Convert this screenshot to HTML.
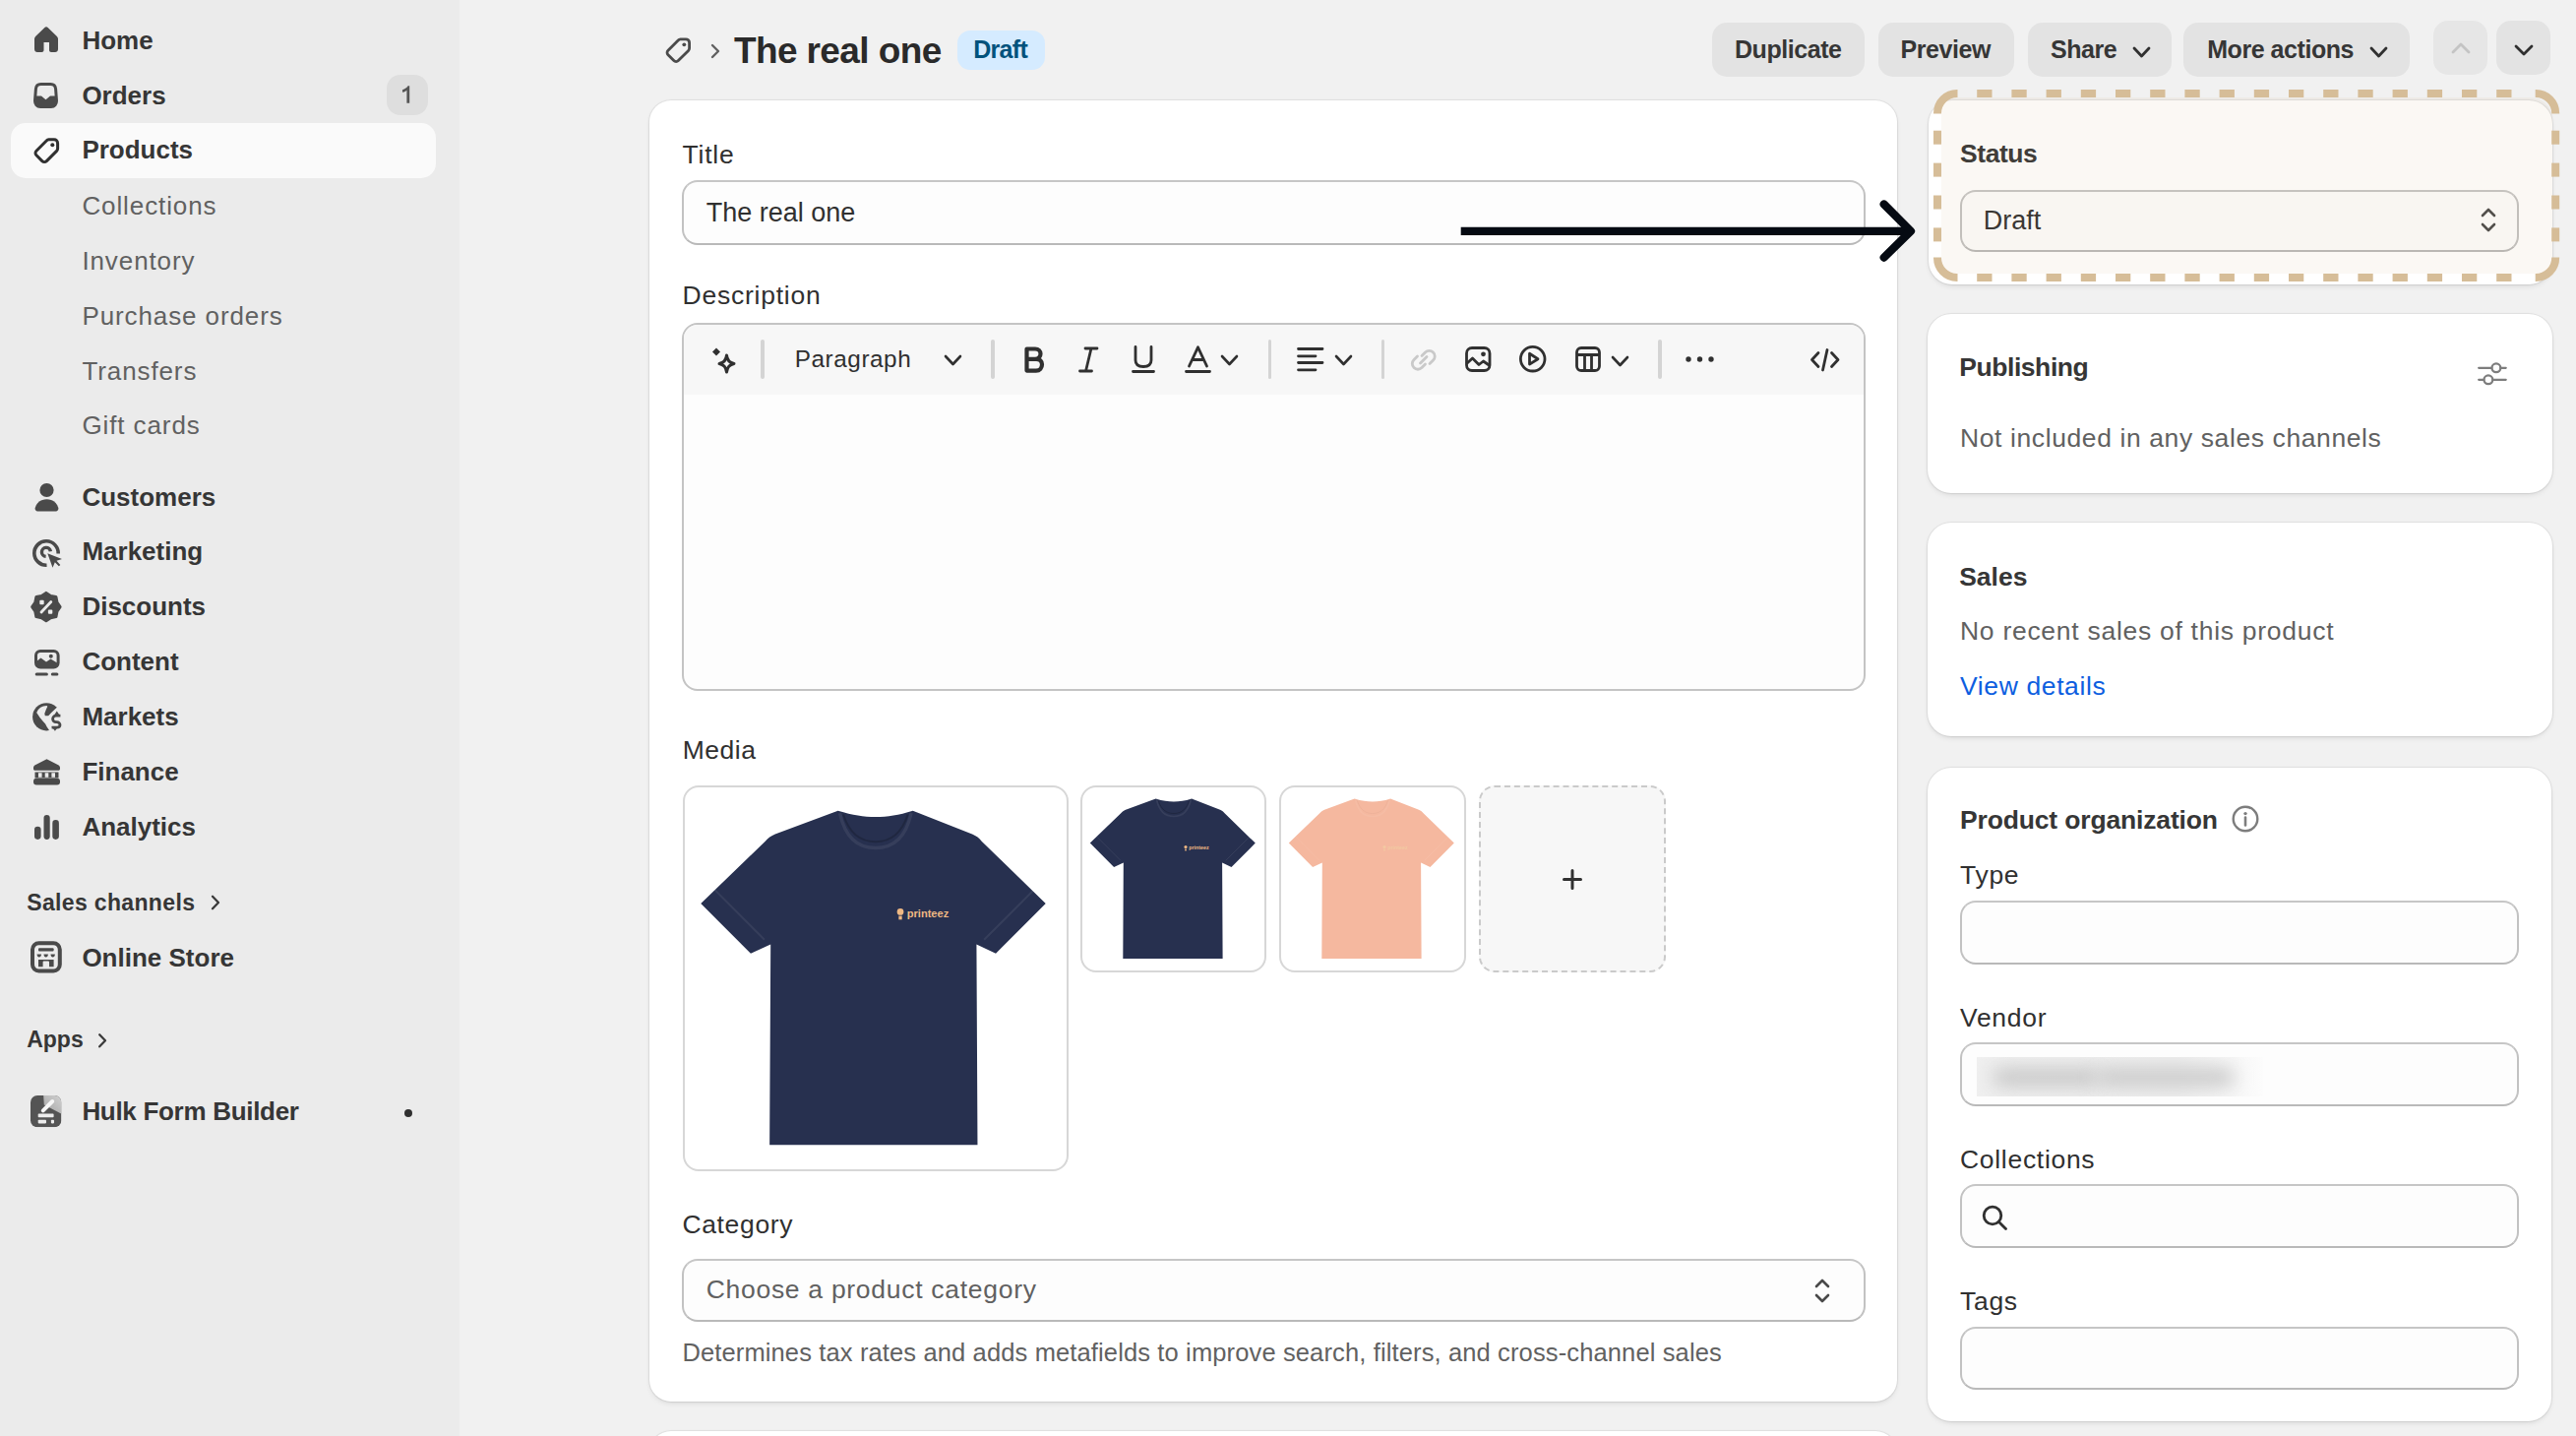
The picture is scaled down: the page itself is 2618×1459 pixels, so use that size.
<!DOCTYPE html>
<html><head><meta charset="utf-8"><style>
html,body{margin:0;padding:0;width:2618px;height:1459px;overflow:hidden;background:#f1f1f1;font-family:'Liberation Sans', sans-serif;}
.t{position:absolute;white-space:nowrap;line-height:1;}
.b{position:absolute;}
.s{position:absolute;overflow:visible;}
</style></head><body>
<div class="b" style="left:0.0px;top:0.0px;width:467.0px;height:1459.0px;background:#ebebeb"></div>
<div class="b" style="left:11.0px;top:124.5px;width:432.0px;height:56.3px;background:#fafafa;border-radius:15px"></div>
<div class="b" style="left:392.6px;top:76.3px;width:42.6px;height:41.2px;background:#dedede;border-radius:14px"></div>
<svg class="s" style="left:407.0px;top:86.0px;" width="12" height="19" viewBox="0 0 12 19"><path d="M9.2 18.8V1.2H7.6C6.8 2.8 4.5 4.6 2 5.2V7.8C4.2 7.4 5.6 6.6 6.4 5.8V18.8Z" fill="#555555"/></svg>
<div class="t" style="left:83.4px;top:28.09px;font-size:26px;font-weight:700;color:#363636;">Home</div>
<div class="t" style="left:83.4px;top:83.79px;font-size:26px;font-weight:700;color:#363636;">Orders</div>
<div class="t" style="left:83.4px;top:139.49px;font-size:26px;font-weight:700;color:#363636;">Products</div>
<div class="t" style="left:83.4px;top:195.99px;font-size:26px;font-weight:400;color:#616161;letter-spacing:0.9px;">Collections</div>
<div class="t" style="left:83.4px;top:252.19px;font-size:26px;font-weight:400;color:#616161;letter-spacing:0.9px;">Inventory</div>
<div class="t" style="left:83.4px;top:307.99px;font-size:26px;font-weight:400;color:#616161;letter-spacing:0.9px;">Purchase orders</div>
<div class="t" style="left:83.4px;top:363.69px;font-size:26px;font-weight:400;color:#616161;letter-spacing:0.9px;">Transfers</div>
<div class="t" style="left:83.4px;top:418.99px;font-size:26px;font-weight:400;color:#616161;letter-spacing:0.9px;">Gift cards</div>
<div class="t" style="left:83.4px;top:491.69px;font-size:26px;font-weight:700;color:#363636;">Customers</div>
<div class="t" style="left:83.4px;top:547.39px;font-size:26px;font-weight:700;color:#363636;">Marketing</div>
<div class="t" style="left:83.4px;top:603.19px;font-size:26px;font-weight:700;color:#363636;">Discounts</div>
<div class="t" style="left:83.4px;top:659.19px;font-size:26px;font-weight:700;color:#363636;">Content</div>
<div class="t" style="left:83.4px;top:715.19px;font-size:26px;font-weight:700;color:#363636;">Markets</div>
<div class="t" style="left:83.4px;top:771.19px;font-size:26px;font-weight:700;color:#363636;">Finance</div>
<div class="t" style="left:83.4px;top:827.19px;font-size:26px;font-weight:700;color:#363636;">Analytics</div>
<div class="t" style="left:27.2px;top:905.73px;font-size:23px;font-weight:700;color:#363636;letter-spacing:0.35px;">Sales channels</div>
<div class="t" style="left:83.4px;top:960.29px;font-size:26px;font-weight:700;color:#363636;">Online Store</div>
<div class="t" style="left:27.2px;top:1045.33px;font-size:23px;font-weight:700;color:#363636;">Apps</div>
<div class="t" style="left:83.4px;top:1115.99px;font-size:26px;font-weight:700;color:#363636;letter-spacing:-0.3px;">Hulk Form Builder</div>
<svg class="s" style="left:210.0px;top:906.0px;" width="16" height="22" viewBox="0 0 16 22"><path d="M6 4.8 L12 11 L6 17.2" fill="none" stroke="#3a3a3a" stroke-width="2.3" stroke-linecap="round" stroke-linejoin="round"/></svg>
<svg class="s" style="left:96.0px;top:1048.0px;" width="16" height="22" viewBox="0 0 16 22"><path d="M5.2 3.3 L11 9.3 L5.2 15.3" fill="none" stroke="#3a3a3a" stroke-width="2.3" stroke-linecap="round" stroke-linejoin="round"/></svg>
<div class="b" style="left:410.5px;top:1126.5px;width:8.0px;height:8.0px;background:#303030;border-radius:50%"></div>
<svg class="s" style="left:34.9px;top:26.8px;" width="24" height="26" viewBox="0 0 24 26"><path fill="#4a4a4a" d="M12 0.3C12.6 0.3 13.2 0.5 13.6 0.9L22.9 10C23.6 10.7 24 11.6 24 12.6V23C24 24.7 22.7 26 21 26H17C15.9 26 15 25.1 15 24V16H9.5V24C9.5 25.1 8.6 26 7.5 26H3C1.3 26 0 24.7 0 23V12.6C0 11.6 0.4 10.7 1.1 10L10.4 0.9C10.8 0.5 11.4 0.3 12 0.3Z"/></svg>
<svg class="s" style="left:34.4px;top:84.0px;" width="25" height="26" viewBox="0 0 25 26"><path fill="none" stroke="#4a4a4a" stroke-width="3" d="M7.5 1.5H17.5C20.5 1.5 22.3 3.3 22.6 6.3L23.5 18.5C23.5 22 21.5 24.5 18 24.5H7C3.5 24.5 1.5 22 1.5 18.5L2.4 6.3C2.7 3.3 4.5 1.5 7.5 1.5Z"/><path fill="#4a4a4a" d="M1.5 13.5H8L12.5 17.2L17 13.5H23.5V19C23.5 22.3 21.5 24.5 18 24.5H7C3.5 24.5 1.5 22.3 1.5 19Z"/></svg>
<svg class="s" style="left:34.0px;top:140.0px;" width="27" height="26" viewBox="0 0 27 26"><path fill="none" stroke="#303030" stroke-width="3" stroke-linejoin="round" d="M15.5 1.8H21C23 1.8 24.6 3.4 24.6 5.4V11C24.6 11.9 24.2 12.8 23.6 13.4L13.4 23.6C12.1 24.9 10.1 24.9 8.8 23.6L3 17.8C1.7 16.5 1.7 14.5 3 13.2L13.2 3C13.8 2.3 14.6 1.8 15.5 1.8Z"/><circle cx="19.3" cy="7.3" r="2" fill="#303030"/></svg>
<svg class="s" style="left:34.8px;top:490.6px;" width="25" height="29" viewBox="0 0 25 29"><circle cx="12.5" cy="7" r="7.1" fill="#4a4a4a"/><path fill="#4a4a4a" d="M12.5 16.2C18.5 16.2 22.8 19.8 24.3 25C24.7 26.6 23.7 28.4 21.8 28.4H3.2C1.3 28.4 0.3 26.6 0.7 25C2.2 19.8 6.5 16.2 12.5 16.2Z"/></svg>
<svg class="s" style="left:32.6px;top:546.8px;" width="31" height="31" viewBox="0 0 31 31"><path fill="none" stroke="#4a4a4a" stroke-width="3.6" d="M26.2 15.5A12.2 12.2 0 1 0 14.5 27.2"/><path fill="none" stroke="#4a4a4a" stroke-width="3.4" d="M18.4 13.2A4.5 4.5 0 1 0 13.6 18.4"/><path fill="#4a4a4a" d="M15.3 15.2L30 21L24.5 22.8L28.3 27L26.8 28.3L22.8 24.2L20.5 29.8Z"/></svg>
<svg class="s" style="left:31.1px;top:601.4px;" width="32" height="32" viewBox="0 0 32 32"><path fill="#4a4a4a" stroke="#4a4a4a" stroke-width="3" stroke-linejoin="round" d="M15.90 1.40L20.49 4.51L25.94 5.56L26.99 11.01L30.10 15.60L26.99 20.19L25.94 25.64L20.49 26.69L15.90 29.80L11.31 26.69L5.86 25.64L4.81 20.19L1.70 15.60L4.81 11.01L5.86 5.56L11.31 4.51Z"/><path stroke="#ebebeb" stroke-width="2.8" stroke-linecap="round" d="M11 21L20.8 10.5"/><rect x="9.3" y="8.8" width="4.4" height="4.4" rx="1" fill="#ebebeb"/><rect x="17.9" y="18.4" width="4.4" height="4.4" rx="1" fill="#ebebeb"/></svg>
<svg class="s" style="left:34.5px;top:659.5px;" width="26" height="27" viewBox="0 0 26 27"><rect x="1.5" y="1.5" width="22.6" height="16.5" rx="4.5" fill="none" stroke="#4a4a4a" stroke-width="3"/><path fill="#4a4a4a" d="M1.5 12.5L6.5 8.5L12 12.5L16.5 9.5L24 14V15C24 16.8 22.8 18 21 18H4.5C2.7 18 1.5 16.8 1.5 15Z"/><circle cx="16.8" cy="6.8" r="2" fill="#4a4a4a"/><rect x="0.7" y="23.4" width="13.2" height="3" rx="1.5" fill="#4a4a4a"/><rect x="16.8" y="23.4" width="7.6" height="3" rx="1.5" fill="#4a4a4a"/></svg>
<svg class="s" style="left:33.0px;top:714.3px;" width="30" height="30" viewBox="0 0 30 30"><circle cx="14.2" cy="14.3" r="14.1" fill="#4a4a4a"/><path fill="#ebebeb" d="M4.2 9.9A11.3 11.3 0 0 1 14.5 3.0L15.3 3.7L13.9 6.8L12.3 11L12.8 13.2L16.2 13.2L19.2 10.1L24.5 5L31 5L31 31L17 27.9L14.5 24.3L13.1 21.6L10.6 18.8L7.5 14.9Z"/><path fill="none" stroke="#ebebeb" stroke-width="3" d="M28.4 13.2H23.8C22 13.2 20.6 14.8 20.6 16.5C20.6 18.2 22 19.6 23.8 19.6H24.6C26.6 19.6 28 21 28 22.6C28 24.2 26.6 25.2 24.6 25.2H19.6"/><path fill="none" stroke="#4a4a4a" stroke-width="2.8" stroke-linejoin="round" d="M28.4 13.2H23.8C22 13.2 20.6 14.8 20.6 16.5C20.6 18.2 22 19.6 23.8 19.6H24.6C26.6 19.6 28 21 28 22.6C28 24.2 26.6 25.2 24.6 25.2H19.6"/><path fill="#4a4a4a" d="M24.8 8.4L28.2 13.4H21.4Z M22.9 28.8L19.4 24H26.4Z"/></svg>
<svg class="s" style="left:33.8px;top:770.6px;" width="27" height="27" viewBox="0 0 27 27"><path fill="#4a4a4a" d="M13.5 0.3L25.2 6.2C26.4 6.8 27 7.8 27 9V10.3C27 11.2 26.3 11.8 25.5 11.8H1.5C0.7 11.8 0 11.2 0 10.3V9C0 7.8 0.6 6.8 1.8 6.2Z"/><path fill="#4a4a4a" d="M1.5 13.5H25.5V19.5H1.5Z"/><path fill="#ebebeb" d="M5 14.2H8.6V18.8H5ZM11.7 14.2H15.3V18.8H11.7ZM18.4 14.2H22V18.8H18.4Z"/><rect x="0" y="19.8" width="27" height="6.6" rx="3" fill="#4a4a4a"/></svg>
<svg class="s" style="left:34.5px;top:828.4px;" width="25" height="25" viewBox="0 0 25 25"><rect x="0" y="11.7" width="6.6" height="13.2" rx="3.3" fill="#4a4a4a"/><rect x="9.5" y="0" width="6.2" height="24.9" rx="3.1" fill="#4a4a4a"/><rect x="18.3" y="5.1" width="6.6" height="19.8" rx="3.3" fill="#4a4a4a"/></svg>
<svg class="s" style="left:31.2px;top:956.2px;" width="33" height="33" viewBox="0 0 33 33"><rect x="2" y="2.3" width="27.8" height="28.2" rx="6.5" fill="none" stroke="#4a4a4a" stroke-width="4"/><rect x="8" y="7.3" width="15.6" height="3.1" rx="1" fill="#4a4a4a"/><path fill="#4a4a4a" d="M6.6 13.4H11C11 15.2 10 16.4 8.8 16.4C7.6 16.4 6.6 15.2 6.6 13.4ZM13.5 13.4H17.9C17.9 15.2 16.9 16.4 15.7 16.4C14.5 16.4 13.5 15.2 13.5 13.4ZM20.5 13.4H24.9C24.9 15.2 23.9 16.4 22.7 16.4C21.5 16.4 20.5 15.2 20.5 13.4Z"/><path fill="#4a4a4a" d="M8 19H23.6V26.3H19V21.5C19 20.8 18.4 20.6 17.8 20.6H13.8C13.2 20.6 12.6 20.8 12.6 21.5V26.3H8Z"/></svg>
<svg class="s" style="left:31.2px;top:1112.6px;" width="32" height="33" viewBox="0 0 32 33"><defs><linearGradient id="hg" x1="0" y1="1" x2="1" y2="0"><stop offset="0" stop-color="#a2a2a2"/><stop offset="1" stop-color="#d2d2d2"/></linearGradient><clipPath id="hc"><rect x="0" y="0" width="31.4" height="32.2" rx="7"/></clipPath></defs><g clip-path="url(#hc)"><rect x="0" y="0" width="31.4" height="32.2" fill="#545454"/><path d="M13.2 0L13.8 9.4L31.6 18.8V0Z" fill="url(#hg)"/></g><path d="M22.2 6L12.8 15.3" stroke="#f6f6f6" stroke-width="4" stroke-linecap="round"/><rect x="7.7" y="18.6" width="15.9" height="3.6" rx="0.8" fill="#ececec"/><rect x="7.7" y="24.7" width="8.3" height="3.7" rx="0.8" fill="#ececec"/><rect x="20.9" y="24.7" width="3.1" height="3.7" rx="0.8" fill="#ececec"/></svg>
<svg class="s" style="left:676.0px;top:37.8px;" width="27" height="26" viewBox="0 0 27 26"><path fill="none" stroke="#4a4a4a" stroke-width="2.8" stroke-linejoin="round" d="M15.5 1.8H21C23 1.8 24.6 3.4 24.6 5.4V11C24.6 11.9 24.2 12.8 23.6 13.4L13.4 23.6C12.1 24.9 10.1 24.9 8.8 23.6L3 17.8C1.7 16.5 1.7 14.5 3 13.2L13.2 3C13.8 2.3 14.6 1.8 15.5 1.8Z"/><circle cx="19.3" cy="7.3" r="1.9" fill="#4a4a4a"/></svg>
<svg class="s" style="left:721.0px;top:43.0px;" width="12" height="18" viewBox="0 0 12 18"><path d="M3 3 L9 9 L3 15" fill="none" stroke="#616161" stroke-width="2.4" stroke-linecap="round" stroke-linejoin="round"/></svg>
<div class="t" style="left:745.9px;top:32.98px;font-size:37px;font-weight:700;color:#2a2a2a;letter-spacing:-0.6px">The real one</div>
<div class="b" style="left:973.0px;top:31.3px;width:89.0px;height:39.3px;background:#d5ebff;border-radius:13px"></div>
<div class="t" style="left:989.2px;top:38.34px;font-size:25px;font-weight:700;color:#00527c;letter-spacing:-0.7px;">Draft</div>
<div class="b" style="left:1739.6px;top:23.4px;width:155.6px;height:55.0px;background:#e3e3e3;border-radius:15px"></div>
<div class="t" style="left:1763.0px;top:38.14px;font-size:25px;font-weight:700;color:#363636;letter-spacing:-0.45px;">Duplicate</div>
<div class="b" style="left:1908.6px;top:23.4px;width:138.4px;height:55.0px;background:#e3e3e3;border-radius:15px"></div>
<div class="t" style="left:1931.6px;top:38.14px;font-size:25px;font-weight:700;color:#363636;letter-spacing:-0.45px;">Preview</div>
<div class="b" style="left:2061.0px;top:23.4px;width:145.6px;height:55.0px;background:#e3e3e3;border-radius:15px"></div>
<div class="t" style="left:2084.0px;top:38.14px;font-size:25px;font-weight:700;color:#363636;letter-spacing:-0.45px;">Share</div>
<div class="b" style="left:2219.3px;top:23.4px;width:229.4px;height:55.0px;background:#e3e3e3;border-radius:15px"></div>
<div class="t" style="left:2243.2px;top:38.14px;font-size:25px;font-weight:700;color:#363636;letter-spacing:-0.45px;">More actions</div>
<svg class="s" style="left:2166.5px;top:46.5px;" width="19" height="12" viewBox="0 0 19 12"><path d="M2 2 L9.5 10 L17 2" fill="none" stroke="#303030" stroke-width="2.8" stroke-linecap="round" stroke-linejoin="round"/></svg>
<svg class="s" style="left:2408.0px;top:46.5px;" width="19" height="12" viewBox="0 0 19 12"><path d="M2 2 L9.5 10 L17 2" fill="none" stroke="#303030" stroke-width="2.8" stroke-linecap="round" stroke-linejoin="round"/></svg>
<div class="b" style="left:2473.4px;top:21.2px;width:55.1px;height:55.1px;background:#e6e6e6;border-radius:15px"></div>
<div class="b" style="left:2537.3px;top:21.2px;width:55.1px;height:55.1px;background:#e3e3e3;border-radius:15px"></div>
<svg class="s" style="left:2491.0px;top:43.0px;" width="20" height="12" viewBox="0 0 20 12"><path d="M2 10 L10 2 L18 10" fill="none" stroke="#c4c4c4" stroke-width="2.8" stroke-linecap="round" stroke-linejoin="round"/></svg>
<svg class="s" style="left:2555.0px;top:44.5px;" width="20" height="12" viewBox="0 0 20 12"><path d="M2 2 L10.0 10 L18 2" fill="none" stroke="#303030" stroke-width="2.8" stroke-linecap="round" stroke-linejoin="round"/></svg>
<div class="b" style="left:660.0px;top:102.0px;width:1268.0px;height:1322.0px;background:#fff;border-radius:22px;box-shadow:0 0 0 1px rgba(0,0,0,0.045),0 0 3px rgba(0,0,0,0.06),0 3px 6px -2px rgba(0,0,0,0.12)"></div>
<div class="b" style="left:660.0px;top:1454.0px;width:1268.0px;height:46.0px;background:#fff;border-radius:22px;box-shadow:0 0 0 1px rgba(0,0,0,0.045),0 0 3px rgba(0,0,0,0.06),0 3px 6px -2px rgba(0,0,0,0.12)"></div>
<div class="t" style="left:693.6px;top:143.57px;font-size:26.5px;font-weight:400;color:#303030;letter-spacing:0.75px;">Title</div>
<div class="b" style="left:693.0px;top:183.3px;width:1203.2px;height:65.3px;background:#fdfdfd;border:2px solid #c2c2c2;border-top-color:#c6c6c6;border-bottom-color:#b9b9b9;border-radius:16px;box-sizing:border-box"></div>
<div class="t" style="left:717.7px;top:202.94px;font-size:27px;font-weight:400;color:#303030;">The real one</div>
<div class="t" style="left:693.6px;top:287.27px;font-size:26.5px;font-weight:400;color:#303030;letter-spacing:0.75px;">Description</div>
<div class="b" style="left:693.0px;top:327.5px;width:1203.2px;height:374.7px;background:#fdfdfd;border:2px solid #c4c4c4;border-radius:16px;box-sizing:border-box;overflow:hidden"></div>
<div class="b" style="left:695.0px;top:329.5px;width:1199.2px;height:71.2px;background:#f7f7f7;border-radius:14px 14px 0 0"></div>
<div class="b" style="left:773.2px;top:344.8px;width:3.4px;height:40.4px;background:#d4d4d4;border-radius:2px"></div>
<div class="b" style="left:1007.2px;top:344.8px;width:3.4px;height:40.4px;background:#d4d4d4;border-radius:2px"></div>
<div class="b" style="left:1289.0px;top:344.8px;width:3.4px;height:40.4px;background:#d4d4d4;border-radius:2px"></div>
<div class="b" style="left:1403.5px;top:344.8px;width:3.4px;height:40.4px;background:#d4d4d4;border-radius:2px"></div>
<div class="b" style="left:1685.2px;top:344.8px;width:3.4px;height:40.4px;background:#d4d4d4;border-radius:2px"></div>
<svg class="s" style="left:721.6px;top:352.9px;" width="26" height="27" viewBox="0 0 26 27"><path fill="#303030" d="M6 0.5L10 4.5L6 8.5L2 4.5Z"/><path fill="none" stroke="#303030" stroke-width="3" stroke-linejoin="round" d="M16.5 8C17 13 19 15.5 24 16.5C19 17.5 17 20 16.5 25C16 20 14 17.5 9 16.5C14 15.5 16 13 16.5 8Z"/></svg>
<div class="t" style="left:807.8px;top:353.03px;font-size:24.3px;font-weight:400;color:#303030;letter-spacing:0.55px;">Paragraph</div>
<svg class="s" style="left:958.5px;top:360.0px;" width="19" height="12" viewBox="0 0 19 12"><path d="M2 2 L9.5 10 L17 2" fill="none" stroke="#303030" stroke-width="2.6" stroke-linecap="round" stroke-linejoin="round"/></svg>
<svg class="s" style="left:1040.7px;top:351.5px;" width="21" height="27" viewBox="0 0 21 27"><path fill="none" stroke="#303030" stroke-width="4.2" stroke-linejoin="round" d="M2.5 2.5H11C14.5 2.5 16.5 4.6 16.5 7.6C16.5 10.5 14.5 12.8 11 12.8H2.5Z M2.5 12.8H12C15.8 12.8 18 15 18 18.3C18 21.8 15.8 24.6 12 24.6H2.5Z"/></svg>
<svg class="s" style="left:1096.0px;top:351.5px;" width="21" height="27" viewBox="0 0 21 27"><path fill="none" stroke="#303030" stroke-width="2.8" stroke-linecap="round" d="M7 2H19M1.5 25H13.5M13 2L7.5 25"/></svg>
<svg class="s" style="left:1149.8px;top:351.0px;" width="24" height="28" viewBox="0 0 24 28"><path fill="none" stroke="#303030" stroke-width="2.8" stroke-linecap="round" d="M4 1.5V15C4 19 6.8 21.5 12 21.5C17.2 21.5 20 19 20 15V1.5M1.5 26.5H22.5"/></svg>
<svg class="s" style="left:1204.2px;top:351.0px;" width="27" height="28" viewBox="0 0 27 28"><path fill="none" stroke="#303030" stroke-width="2.8" stroke-linecap="round" stroke-linejoin="round" d="M4.5 21L13.5 1.8L22.5 21M7.8 14.5H19.2M1.5 26.5H25.5"/></svg>
<svg class="s" style="left:1240.0px;top:360.0px;" width="19" height="12" viewBox="0 0 19 12"><path d="M2 2 L9.5 10 L17 2" fill="none" stroke="#303030" stroke-width="2.6" stroke-linecap="round" stroke-linejoin="round"/></svg>
<svg class="s" style="left:1318.0px;top:352.5px;" width="28" height="25" viewBox="0 0 28 25"><path fill="none" stroke="#303030" stroke-width="2.8" stroke-linecap="round" d="M1.5 1.5H26M1.5 8.8H19M1.5 15.5H26M1.5 22.8H19"/></svg>
<svg class="s" style="left:1355.5px;top:360.0px;" width="19" height="12" viewBox="0 0 19 12"><path d="M2 2 L9.5 10 L17 2" fill="none" stroke="#303030" stroke-width="2.6" stroke-linecap="round" stroke-linejoin="round"/></svg>
<svg class="s" style="left:1432.5px;top:351.5px;" width="28" height="27" viewBox="0 0 28 27"><path fill="none" stroke="#c9c9c9" stroke-width="2.8" stroke-linecap="round" d="M12 9.5L15.5 6C17.8 3.7 21.3 3.7 23.5 6C25.8 8.2 25.8 11.7 23.5 14L20 17.5M15.5 18L12 21.5C9.7 23.8 6.2 23.8 4 21.5C1.7 19.3 1.7 15.8 4 13.5L7.5 10M10.5 17L17 10.5"/></svg>
<svg class="s" style="left:1489.0px;top:352.3px;" width="27" height="26" viewBox="0 0 27 26"><rect x="1.5" y="1.5" width="23.5" height="23" rx="5.5" fill="none" stroke="#303030" stroke-width="2.8"/><path fill="none" stroke="#303030" stroke-width="2.8" stroke-linejoin="round" d="M1.5 17.5L7.5 12L14 18.5L18.5 15L25 19.5"/><circle cx="18.5" cy="7.8" r="2.4" fill="#303030"/></svg>
<svg class="s" style="left:1544.3px;top:351.0px;" width="28" height="28" viewBox="0 0 28 28"><circle cx="13.7" cy="13.7" r="12.3" fill="none" stroke="#303030" stroke-width="2.8"/><path fill="none" stroke="#303030" stroke-width="2.8" stroke-linejoin="round" d="M10.5 8.3V19.1L19 13.7Z"/></svg>
<svg class="s" style="left:1601.0px;top:352.3px;" width="26" height="26" viewBox="0 0 26 26"><rect x="1.5" y="1.5" width="23" height="23" rx="4.5" fill="none" stroke="#303030" stroke-width="2.8"/><path fill="none" stroke="#303030" stroke-width="2.8" d="M1.5 8.5H24.5M9.5 8.5V24.5M16.5 8.5V24.5"/></svg>
<svg class="s" style="left:1636.5px;top:360.5px;" width="19" height="12" viewBox="0 0 19 12"><path d="M2 2 L9.5 10 L17 2" fill="none" stroke="#303030" stroke-width="2.6" stroke-linecap="round" stroke-linejoin="round"/></svg>
<svg class="s" style="left:1713.0px;top:362.0px;" width="29" height="6" viewBox="0 0 29 6"><circle cx="3" cy="3" r="2.7" fill="#303030"/><circle cx="14.5" cy="3" r="2.7" fill="#303030"/><circle cx="26" cy="3" r="2.7" fill="#303030"/></svg>
<svg class="s" style="left:1840.0px;top:353.5px;" width="30" height="24" viewBox="0 0 30 24"><path fill="none" stroke="#303030" stroke-width="2.8" stroke-linecap="round" stroke-linejoin="round" d="M8 4.5L1.5 11.5L8 18.5M21.5 4.5L28 11.5L21.5 18.5M17 1.5L12.5 22"/></svg>
<div class="t" style="left:693.7px;top:749.37px;font-size:26.5px;font-weight:400;color:#303030;letter-spacing:0.52px;">Media</div>
<div class="b" style="left:693.5px;top:798.0px;width:392.2px;height:392.2px;background:#fff;border:2px solid #d7d7d7;border-radius:16px;box-sizing:border-box;overflow:hidden"></div>
<svg class="s" style="left:695.5px;top:800.0px;" width="388" height="388" viewBox="2 2 186 186"><path fill="#27304f" d="M76.6 13.4C84 15.6 89 16.4 94.9 16.4C101 16.4 106 15.6 113.1 13.4L142 24.8C144 25.6 145.5 26.8 146.6 28.2L177.8 58.6L153.5 82.9L144.1 78.5L144.6 176.1H43.3L43.8 78.5L34.1 82.9L9.8 58.6L41.2 28.2C42.5 26.8 44 25.6 46 24.8Z"/><path fill="none" stroke="rgba(255,255,255,0.07)" stroke-width="1.6" d="M77.5 14.5C80 26 86 31.5 94.9 31.5C103.8 31.5 109.8 26 112.3 14.5"/><path fill="none" stroke="rgba(0,0,0,0.18)" stroke-width="1" d="M79.2 15.2C82 24 87 28.5 94.9 28.5C102.8 28.5 107.8 24 110.6 15.2"/><path fill="none" stroke="rgba(255,255,255,0.07)" stroke-width="1" d="M16.5 51.8L40.8 76.2M172 52L147.8 76.2"/><circle cx="107" cy="62.6" r="1.6" fill="#efb883"/><rect x="106.2" y="64.6" width="1.6" height="1.8" fill="#efb883"/><text x="110.2" y="65.3" font-family="Liberation Sans" font-weight="700" font-size="5.6" textLength="20.4" lengthAdjust="spacingAndGlyphs" fill="#efb883">printeez</text></svg>
<div class="b" style="left:1097.6px;top:797.8px;width:189.8px;height:190.4px;background:#fff;border:2px solid #d7d7d7;border-radius:16px;box-sizing:border-box;overflow:hidden"></div>
<svg class="s" style="left:1099.6px;top:799.8px;" width="186" height="186" viewBox="2 2 186 186"><path fill="#27304f" d="M76.6 13.4C84 15.6 89 16.4 94.9 16.4C101 16.4 106 15.6 113.1 13.4L142 24.8C144 25.6 145.5 26.8 146.6 28.2L177.8 58.6L153.5 82.9L144.1 78.5L144.6 176.1H43.3L43.8 78.5L34.1 82.9L9.8 58.6L41.2 28.2C42.5 26.8 44 25.6 46 24.8Z"/><path fill="none" stroke="rgba(255,255,255,0.07)" stroke-width="1.6" d="M77.5 14.5C80 26 86 31.5 94.9 31.5C103.8 31.5 109.8 26 112.3 14.5"/><path fill="none" stroke="rgba(0,0,0,0.18)" stroke-width="1" d="M79.2 15.2C82 24 87 28.5 94.9 28.5C102.8 28.5 107.8 24 110.6 15.2"/><path fill="none" stroke="rgba(255,255,255,0.07)" stroke-width="1" d="M16.5 51.8L40.8 76.2M172 52L147.8 76.2"/><circle cx="107" cy="62.6" r="1.6" fill="#efb883"/><rect x="106.2" y="64.6" width="1.6" height="1.8" fill="#efb883"/><text x="110.2" y="65.3" font-family="Liberation Sans" font-weight="700" font-size="5.6" textLength="20.4" lengthAdjust="spacingAndGlyphs" fill="#efb883">printeez</text></svg>
<div class="b" style="left:1299.7px;top:797.8px;width:190.7px;height:190.4px;background:#fff;border:2px solid #d7d7d7;border-radius:16px;box-sizing:border-box;overflow:hidden"></div>
<svg class="s" style="left:1301.7px;top:799.8px;" width="186" height="186" viewBox="2 2 186 186"><path fill="#f5b89f" d="M76.6 13.4C84 15.6 89 16.4 94.9 16.4C101 16.4 106 15.6 113.1 13.4L142 24.8C144 25.6 145.5 26.8 146.6 28.2L177.8 58.6L153.5 82.9L144.1 78.5L144.6 176.1H43.3L43.8 78.5L34.1 82.9L9.8 58.6L41.2 28.2C42.5 26.8 44 25.6 46 24.8Z"/><path fill="none" stroke="rgba(255,255,255,0.06)" stroke-width="1.6" d="M77.5 14.5C80 26 86 31.5 94.9 31.5C103.8 31.5 109.8 26 112.3 14.5"/><path fill="none" stroke="rgba(0,0,0,0.03)" stroke-width="1" d="M79.2 15.2C82 24 87 28.5 94.9 28.5C102.8 28.5 107.8 24 110.6 15.2"/><path fill="none" stroke="rgba(255,255,255,0.06)" stroke-width="1" d="M16.5 51.8L40.8 76.2M172 52L147.8 76.2"/><circle cx="107" cy="62.6" r="1.6" fill="#f3c9a2"/><rect x="106.2" y="64.6" width="1.6" height="1.8" fill="#f3c9a2"/><text x="110.2" y="65.3" font-family="Liberation Sans" font-weight="700" font-size="5.6" textLength="20.4" lengthAdjust="spacingAndGlyphs" fill="#f3c9a2">printeez</text></svg>
<div class="b" style="left:1502.9px;top:797.8px;width:190.3px;height:190.4px;background:#f7f7f7;border:2px dashed #cacaca;border-radius:16px;box-sizing:border-box"></div>
<svg class="s" style="left:1587.5px;top:882.5px;" width="20" height="21" viewBox="0 0 20 21"><path d="M10 1.5V19.5M1.5 10.5H18.5" stroke="#303030" stroke-width="3" stroke-linecap="round"/></svg>
<div class="t" style="left:693.4px;top:1230.67px;font-size:26.5px;font-weight:400;color:#303030;letter-spacing:0.66px;">Category</div>
<div class="b" style="left:693.3px;top:1279.3px;width:1202.5px;height:63.3px;background:#fdfdfd;border:2px solid #c2c2c2;border-top-color:#c6c6c6;border-bottom-color:#b9b9b9;border-radius:16px;box-sizing:border-box"></div>
<div class="t" style="left:717.7px;top:1297.37px;font-size:26.5px;font-weight:400;color:#616161;letter-spacing:0.71px;">Choose a product category</div>
<svg class="s" style="left:1844.0px;top:1298.5px;" width="16" height="25" viewBox="0 0 16 25"><path fill="none" stroke="#4a4a4a" stroke-width="2.6" stroke-linecap="round" stroke-linejoin="round" d="M2 8L8 2L14 8M2 17L8 23L14 17"/></svg>
<div class="t" style="left:693.4px;top:1362.41px;font-size:25.5px;font-weight:400;color:#616161;letter-spacing:0.13px;">Determines tax rates and adds metafields to improve search, filters, and cross-channel sales</div>
<div class="b" style="left:1959.5px;top:101.5px;width:634.7px;height:187.7px;background:#fff;border-radius:24px;box-shadow:0 0 0 1px rgba(0,0,0,0.045),0 0 3px rgba(0,0,0,0.06),0 3px 6px -2px rgba(0,0,0,0.12)"></div>
<div class="t" style="left:1992.1px;top:143.17px;font-size:26.5px;font-weight:700;color:#363636;letter-spacing:-0.45px;">Status</div>
<div class="b" style="left:1992.0px;top:192.6px;width:568.0px;height:63.0px;background:#fdfdfd;border:2px solid #c2c2c2;border-top-color:#c6c6c6;border-bottom-color:#b9b9b9;border-radius:16px;box-sizing:border-box"></div>
<div class="t" style="left:2015.8px;top:210.74px;font-size:27px;font-weight:400;color:#303030;">Draft</div>
<svg class="s" style="left:2521.0px;top:211.0px;" width="16" height="25" viewBox="0 0 16 25"><path fill="none" stroke="#4a4a4a" stroke-width="2.6" stroke-linecap="round" stroke-linejoin="round" d="M2 8L8 2L14 8M2 17L8 23L14 17"/></svg>
<div class="b" style="left:1973.0px;top:99.2px;width:621.2px;height:179.3px;background:rgba(200,160,110,0.075);border-radius:0 22px 0 0"></div>
<svg class="s" style="left:1965.0px;top:91.2px;" width="636.2" height="195.0" viewBox="0 0 636.2 195.0"><path d="M4.0 24.5V24.0A20.0 20.0 0 0 1 24.0 4.0H24.5 M611.6999999999998 4.0H612.1999999999998A20.0 20.0 0 0 1 632.1999999999998 24.0V24.5 M632.1999999999998 170.5V171.0A20.0 20.0 0 0 1 612.1999999999998 191.0H611.6999999999998 M24.5 191.0H24.0A20.0 20.0 0 0 1 4.0 171.0V170.5" fill="none" stroke="#d6bd98" stroke-width="8"/><rect x="44.2" y="0" width="15.3" height="8" fill="#d6bd98"/><rect x="44.2" y="187.0" width="15.3" height="8" fill="#d6bd98"/><rect x="79.4" y="0" width="15.3" height="8" fill="#d6bd98"/><rect x="79.4" y="187.0" width="15.3" height="8" fill="#d6bd98"/><rect x="114.6" y="0" width="15.3" height="8" fill="#d6bd98"/><rect x="114.6" y="187.0" width="15.3" height="8" fill="#d6bd98"/><rect x="149.8" y="0" width="15.3" height="8" fill="#d6bd98"/><rect x="149.8" y="187.0" width="15.3" height="8" fill="#d6bd98"/><rect x="185.0" y="0" width="15.3" height="8" fill="#d6bd98"/><rect x="185.0" y="187.0" width="15.3" height="8" fill="#d6bd98"/><rect x="220.2" y="0" width="15.3" height="8" fill="#d6bd98"/><rect x="220.2" y="187.0" width="15.3" height="8" fill="#d6bd98"/><rect x="255.4" y="0" width="15.3" height="8" fill="#d6bd98"/><rect x="255.4" y="187.0" width="15.3" height="8" fill="#d6bd98"/><rect x="290.6" y="0" width="15.3" height="8" fill="#d6bd98"/><rect x="290.6" y="187.0" width="15.3" height="8" fill="#d6bd98"/><rect x="325.8" y="0" width="15.3" height="8" fill="#d6bd98"/><rect x="325.8" y="187.0" width="15.3" height="8" fill="#d6bd98"/><rect x="361.0" y="0" width="15.3" height="8" fill="#d6bd98"/><rect x="361.0" y="187.0" width="15.3" height="8" fill="#d6bd98"/><rect x="396.2" y="0" width="15.3" height="8" fill="#d6bd98"/><rect x="396.2" y="187.0" width="15.3" height="8" fill="#d6bd98"/><rect x="431.4" y="0" width="15.3" height="8" fill="#d6bd98"/><rect x="431.4" y="187.0" width="15.3" height="8" fill="#d6bd98"/><rect x="466.6" y="0" width="15.3" height="8" fill="#d6bd98"/><rect x="466.6" y="187.0" width="15.3" height="8" fill="#d6bd98"/><rect x="501.8" y="0" width="15.3" height="8" fill="#d6bd98"/><rect x="501.8" y="187.0" width="15.3" height="8" fill="#d6bd98"/><rect x="537.0" y="0" width="15.3" height="8" fill="#d6bd98"/><rect x="537.0" y="187.0" width="15.3" height="8" fill="#d6bd98"/><rect x="572.2" y="0" width="15.3" height="8" fill="#d6bd98"/><rect x="572.2" y="187.0" width="15.3" height="8" fill="#d6bd98"/><rect x="0" y="41.7" width="8" height="14" fill="#d6bd98"/><rect x="628.2" y="41.7" width="8" height="14" fill="#d6bd98"/><rect x="0" y="74.6" width="8" height="14" fill="#d6bd98"/><rect x="628.2" y="74.6" width="8" height="14" fill="#d6bd98"/><rect x="0" y="107.5" width="8" height="14" fill="#d6bd98"/><rect x="628.2" y="107.5" width="8" height="14" fill="#d6bd98"/><rect x="0" y="140.4" width="8" height="14" fill="#d6bd98"/><rect x="628.2" y="140.4" width="8" height="14" fill="#d6bd98"/></svg>
<svg class="s" style="left:1480.0px;top:200.0px;" width="470" height="70" viewBox="0 0 470 70"><path d="M4.7 34.8H460" fill="none" stroke="#050a12" stroke-width="8.2"/><path d="M434.7 7.5L462 34.8L434.7 61.6" fill="none" stroke="#050a12" stroke-width="8.2" stroke-linecap="round" stroke-linejoin="round"/></svg>
<div class="b" style="left:1959.4px;top:319.4px;width:634.2px;height:181.2px;background:#fff;border-radius:24px;box-shadow:0 0 0 1px rgba(0,0,0,0.045),0 0 3px rgba(0,0,0,0.06),0 3px 6px -2px rgba(0,0,0,0.12)"></div>
<div class="t" style="left:1991.2px;top:359.57px;font-size:26.5px;font-weight:700;color:#363636;letter-spacing:-0.43px;">Publishing</div>
<svg class="s" style="left:2517.0px;top:366.0px;" width="32" height="28" viewBox="0 0 32 28"><path fill="none" stroke="#7d7d7d" stroke-width="2.3" stroke-linecap="round" d="M2.2 7.8H15.2M24.6 7.8H29.7M2.2 19.8H7.2M16.6 19.8H29.7"/><circle cx="19.9" cy="7.8" r="4.4" fill="none" stroke="#7d7d7d" stroke-width="2.3"/><circle cx="11.9" cy="19.8" r="4.4" fill="none" stroke="#7d7d7d" stroke-width="2.3"/></svg>
<div class="t" style="left:1992.0px;top:432.17px;font-size:26.5px;font-weight:400;color:#616161;letter-spacing:0.6px;">Not included in any sales channels</div>
<div class="b" style="left:1959.4px;top:530.7px;width:634.2px;height:217.3px;background:#fff;border-radius:24px;box-shadow:0 0 0 1px rgba(0,0,0,0.045),0 0 3px rgba(0,0,0,0.06),0 3px 6px -2px rgba(0,0,0,0.12)"></div>
<div class="t" style="left:1991.2px;top:572.57px;font-size:26.5px;font-weight:700;color:#363636;">Sales</div>
<div class="t" style="left:1992.0px;top:627.77px;font-size:26.5px;font-weight:400;color:#616161;letter-spacing:0.72px;">No recent sales of this product</div>
<div class="t" style="left:1992.0px;top:683.57px;font-size:26.5px;font-weight:400;color:#0d5ee0;letter-spacing:0.62px;">View details</div>
<div class="b" style="left:1959.0px;top:779.6px;width:634.2px;height:664.6px;background:#fff;border-radius:24px;box-shadow:0 0 0 1px rgba(0,0,0,0.045),0 0 3px rgba(0,0,0,0.06),0 3px 6px -2px rgba(0,0,0,0.12)"></div>
<div class="t" style="left:1992.0px;top:819.87px;font-size:26.5px;font-weight:700;color:#363636;letter-spacing:-0.16px;">Product organization</div>
<svg class="s" style="left:2268.0px;top:818.0px;" width="28" height="28" viewBox="0 0 28 28"><circle cx="14" cy="14" r="12.3" fill="none" stroke="#7d7d7d" stroke-width="2.4"/><circle cx="14" cy="8.6" r="1.7" fill="#7d7d7d"/><path d="M14 12.5V20.5" stroke="#7d7d7d" stroke-width="2.6" stroke-linecap="round"/></svg>
<div class="t" style="left:1992.0px;top:875.77px;font-size:26.5px;font-weight:400;color:#303030;letter-spacing:0.7px;">Type</div>
<div class="b" style="left:1991.5px;top:915.2px;width:568.9px;height:65.1px;background:#fdfdfd;border:2px solid #c2c2c2;border-top-color:#c6c6c6;border-bottom-color:#b9b9b9;border-radius:16px;box-sizing:border-box"></div>
<div class="t" style="left:1992.0px;top:1020.97px;font-size:26.5px;font-weight:400;color:#303030;letter-spacing:0.7px;">Vendor</div>
<div class="b" style="left:1991.5px;top:1059.3px;width:568.9px;height:64.8px;background:#fdfdfd;border:2px solid #c2c2c2;border-top-color:#c6c6c6;border-bottom-color:#b9b9b9;border-radius:16px;box-sizing:border-box"></div>
<div class="t" style="left:1992.0px;top:1164.87px;font-size:26.5px;font-weight:400;color:#303030;letter-spacing:0.7px;">Collections</div>
<div class="b" style="left:1991.5px;top:1203.3px;width:568.9px;height:64.8px;background:#fdfdfd;border:2px solid #c2c2c2;border-top-color:#c6c6c6;border-bottom-color:#b9b9b9;border-radius:16px;box-sizing:border-box"></div>
<div class="t" style="left:1992.0px;top:1308.87px;font-size:26.5px;font-weight:400;color:#303030;letter-spacing:0.7px;">Tags</div>
<div class="b" style="left:1991.5px;top:1348.2px;width:568.9px;height:64.0px;background:#fdfdfd;border:2px solid #c2c2c2;border-top-color:#c6c6c6;border-bottom-color:#b9b9b9;border-radius:16px;box-sizing:border-box"></div>
<div class="b" style="left:2009.2px;top:1074.1px;width:290.8px;height:40.3px;overflow:hidden;background:linear-gradient(to right,#efefef,#ededed 70%,#fcfcfc 100%)"><div class="b" style="left:16px;top:11px;width:110px;height:19px;background:#c9c9c9;border-radius:9px;filter:blur(9px)"></div><div class="b" style="left:122px;top:11px;width:140px;height:19px;background:#cbcbcb;border-radius:9px;filter:blur(9px)"></div></div>
<svg class="s" style="left:2014.4px;top:1223.5px;" width="27" height="27" viewBox="0 0 27 27"><circle cx="11" cy="11" r="8.8" fill="none" stroke="#303030" stroke-width="2.8"/><path d="M17.5 17.5L24.5 24.5" stroke="#303030" stroke-width="2.8" stroke-linecap="round"/></svg>
</body></html>
